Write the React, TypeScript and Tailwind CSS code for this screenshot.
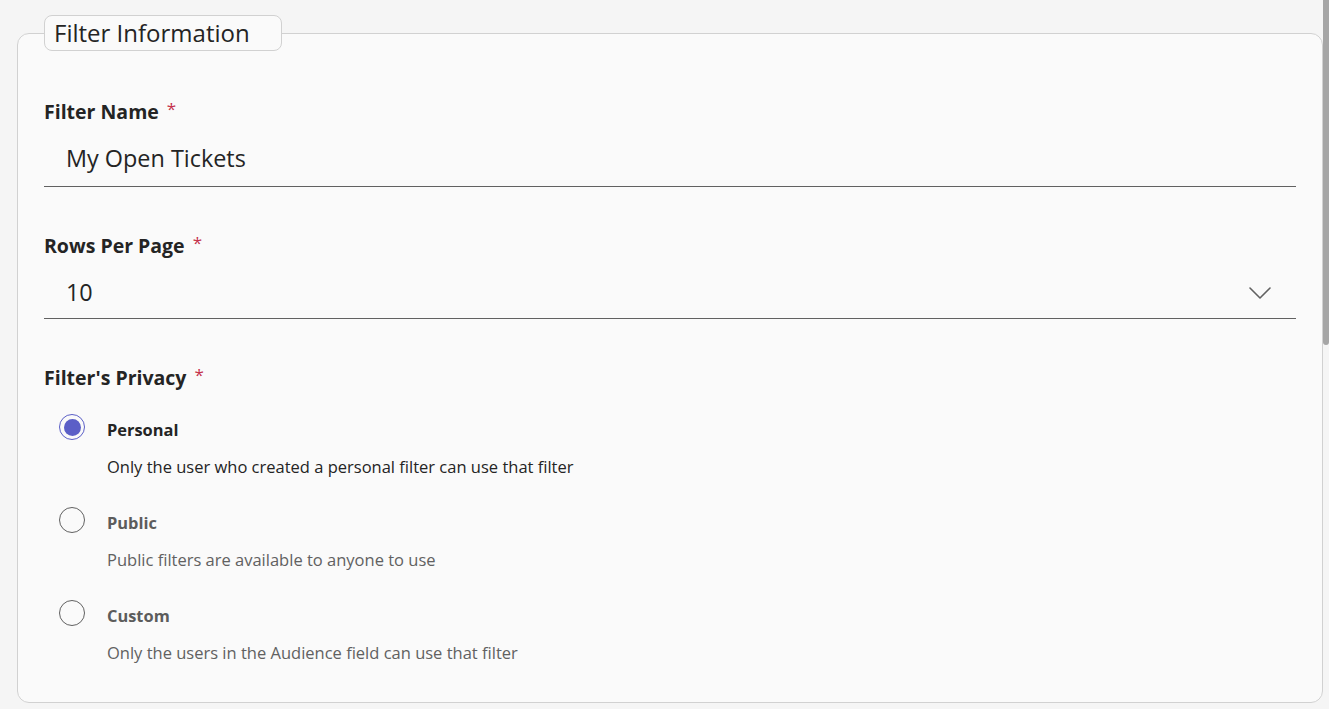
import React from "react";

const font = { fontFamily: '"Open Sans", "Noto Sans", sans-serif' };

function Radio({ checked }: { checked: boolean }) {
  return checked ? (
    <div className="mt-[-4px] flex h-[26px] w-[26px] items-center justify-center rounded-full border border-[#5b5fc7] bg-[#fafafa]">
      <div className="h-[17px] w-[17px] rounded-full bg-[#5b5fc7]" />
    </div>
  ) : (
    <div className="mt-[-4px] h-[26px] w-[26px] rounded-full border border-[#616161] bg-[#fafafa]" />
  );
}

function Option({
  checked,
  label,
  desc,
}: {
  checked: boolean;
  label: string;
  desc: string;
}) {
  return (
    <div className="ml-[15px] grid grid-cols-[26px_1fr] gap-x-[22px]">
      <Radio checked={checked} />
      <div className="flex flex-col gap-[13px]">
        <div
          className={`text-[16.4px] font-bold leading-[24px] ${
            checked ? "text-[#242424]" : "text-[#5c5c5c]"
          }`}
        >
          {label}
        </div>
        <div
          className={`text-[16.5px] leading-[24px] ${
            checked ? "text-[#242424]" : "text-[#616161]"
          }`}
        >
          {desc}
        </div>
      </div>
    </div>
  );
}

function Label({ text }: { text: string }) {
  return (
    <div className="flex h-[28px] items-start text-[19.5px] font-bold leading-[28px] text-[#242424]">
      <span>{text}</span>
      <span className="ml-[8px] text-[17px] font-normal leading-[22px] text-[#c4314b]">
        *
      </span>
    </div>
  );
}

export default function App() {
  return (
    <div
      className="relative h-[709px] w-full overflow-hidden bg-[#f5f5f5] pl-[17px] pr-[6px] pt-[15px]"
      style={font}
    >
      <fieldset className="h-[688px] min-w-0 rounded-[12px] border border-[#d1d1d1] bg-[#fafafa] px-[26px]">
        <legend className="h-[36px] w-[238px] rounded-[8px] border border-[#d1d1d1] bg-[#fafafa] px-[9px] text-[24px] leading-[34px] text-[#242424]">
          Filter Information
        </legend>

        <div className="mt-[47px]">
          <Label text="Filter Name" />
        </div>
        <div className="mt-[4px] flex h-[57px] items-center border-b border-[#616161] px-[22px] pt-[2px] text-[23.4px] text-[#242424]">
          My Open Tickets
        </div>

        <div className="mt-[45px]">
          <Label text="Rows Per Page" />
        </div>
        <div className="mt-[4px] flex h-[55px] items-center justify-between border-b border-[#616161] pl-[22px] pr-[25px] pt-[4px] text-[23.4px] text-[#242424]">
          <span>10</span>
          <svg width="22" height="12" viewBox="0 0 22 12" fill="none">
            <path
              d="M1 1 L11 11 L21 1"
              stroke="#616161"
              strokeWidth="1.6"
              strokeLinecap="round"
              strokeLinejoin="round"
            />
          </svg>
        </div>

        <div className="mt-[45px]">
          <Label text="Filter's Privacy" />
        </div>
        <div className="mt-[26px] flex flex-col gap-[32px]">
          <Option
            checked
            label="Personal"
            desc="Only the user who created a personal filter can use that filter"
          />
          <Option
            checked={false}
            label="Public"
            desc="Public filters are available to anyone to use"
          />
          <Option
            checked={false}
            label="Custom"
            desc="Only the users in the Audience field can use that filter"
          />
        </div>
      </fieldset>
      <div className="absolute right-0 top-0 h-[345px] w-[6px] rounded-b-[3px] bg-[#a6a6a6]" />
    </div>
  );
}
